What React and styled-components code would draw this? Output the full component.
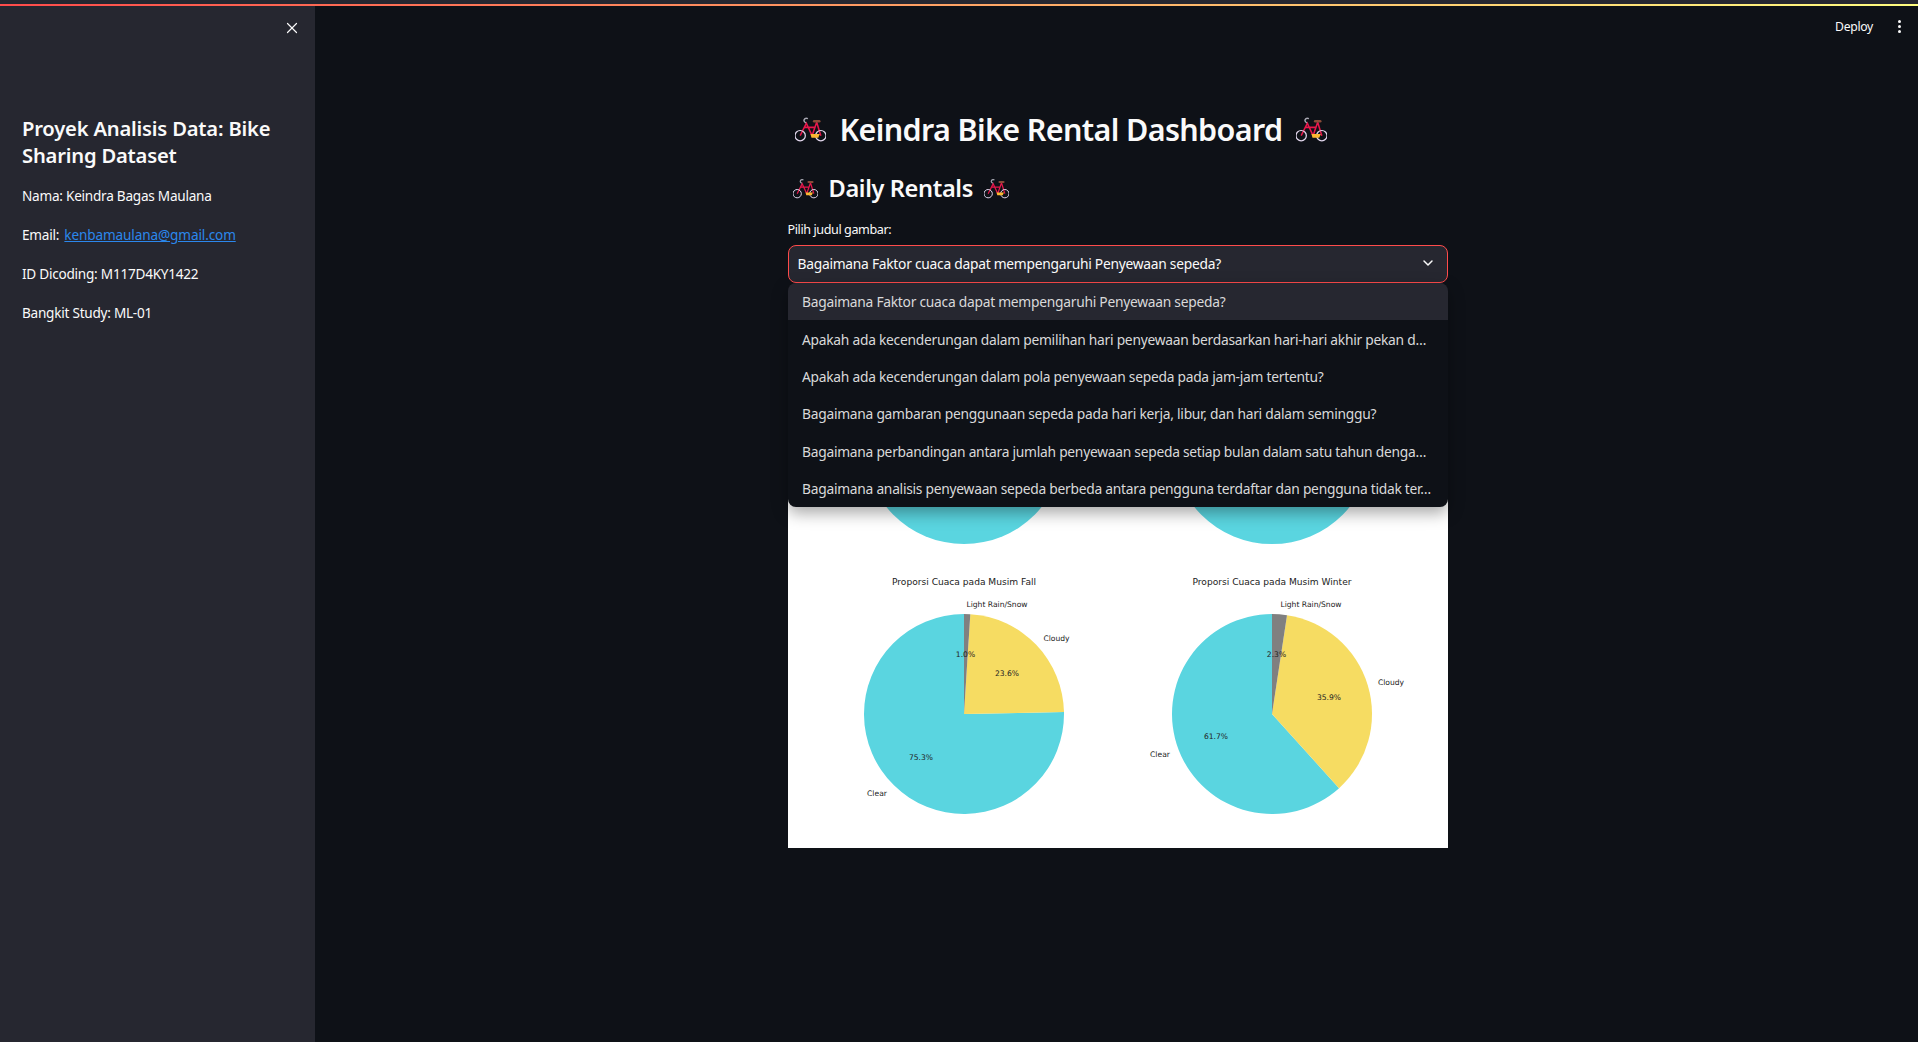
import React from 'react';
import styled, { createGlobalStyle } from 'styled-components';
import { ChevronDown, X } from 'lucide-react';

const options = [
    'Bagaimana Faktor cuaca dapat mempengaruhi Penyewaan sepeda?',
    'Apakah ada kecenderungan dalam pemilihan hari penyewaan berdasarkan hari-hari akhir pekan d…',
    'Apakah ada kecenderungan dalam pola penyewaan sepeda pada jam-jam tertentu?',
    'Bagaimana gambaran penggunaan sepeda pada hari kerja, libur, dan hari dalam seminggu?',
    'Bagaimana perbandingan antara jumlah penyewaan sepeda setiap bulan dalam satu tahun denga…',
    'Bagaimana analisis penyewaan sepeda berbeda antara pengguna terdaftar dan pengguna tidak ter…',
];

const CLEAR = '#5ad5e0';
const CLOUDY = '#f6dc62';
const LIGHT = '#808080';

function slicePath(cx, cy, r, from, to) {
    const rad = (deg) => (deg * Math.PI) / 180;
    const x1 = cx + r * Math.cos(rad(from));
    const y1 = cy - r * Math.sin(rad(from));
    const x2 = cx + r * Math.cos(rad(to));
    const y2 = cy - r * Math.sin(rad(to));
    const large = to - from > 180 ? 1 : 0;
    return `M${cx} ${cy} L${x1} ${y1} A${r} ${r} 0 ${large} 0 ${x2} ${y2} Z`;
}

function Pie({ cx, cy, shares }) {
    let start = 90;
    return (
        <g>
            {shares.map(([share, color]) => {
                const end = start + share * 3.6;
                const d = share === 100
                    ? `M${cx - 100} ${cy} a100 100 0 1 0 200 0 a100 100 0 1 0 -200 0 Z`
                    : slicePath(cx, cy, 100, start, end);
                start = end;
                return <path key={color} d={d} fill={color} />;
            })}
        </g>
    );
}

function Bike({ size }) {
    return (
        <svg width={size} height={size * 0.9} viewBox="0 0 30 27" fill="none">
            <path d="M5 20 L11 8 L16.5 20 L21 7 L25 20 M9.5 12 H19.5" stroke="#e8174b" strokeWidth="1.5" />
            <path d="M12.5 3.5 C9 2.2 7 6 10.6 7.6" stroke="#a9a9b4" strokeWidth="1.4" />
            <path d="M18.5 6 H23.5" stroke="#8a4b38" strokeWidth="2.4" strokeLinecap="round" />
            <circle cx="5" cy="20" r="5" stroke="#e3d8ee" strokeWidth="1.2" />
            <circle cx="25" cy="20" r="5" stroke="#e3d8ee" strokeWidth="1.2" />
            <path d="M15 18.5 H24 L22.5 22 H16 Z" fill="#fbb731" />
        </svg>
    );
}

function Chart() {
    return (
        <ChartSvg viewBox="0 0 660 549">
            <rect width="660" height="549" fill="#fff" />
            <Pie cx={176} cy={145} shares={[[100, CLEAR]]} />
            <Pie cx={484} cy={145} shares={[[100, CLEAR]]} />
            <Pie cx={176} cy={415} shares={[[75.3, CLEAR], [23.7, CLOUDY], [1.0, LIGHT]]} />
            <Pie cx={484} cy={415} shares={[[61.7, CLEAR], [35.9, CLOUDY], [2.4, LIGHT]]} />

            <ChartTitle x="176" y="283">Proporsi Cuaca pada Musim Fall</ChartTitle>
            <ChartLabel x="209" y="305">Light Rain/Snow</ChartLabel>
            <ChartLabel x="268.5" y="339">Cloudy</ChartLabel>
            <ChartLabel x="177.5" y="355">1.0%</ChartLabel>
            <ChartLabel x="219" y="374">23.6%</ChartLabel>
            <ChartLabel x="133" y="458">75.3%</ChartLabel>
            <ChartLabel x="89" y="494">Clear</ChartLabel>

            <ChartTitle x="484" y="283">Proporsi Cuaca pada Musim Winter</ChartTitle>
            <ChartLabel x="523" y="305">Light Rain/Snow</ChartLabel>
            <ChartLabel x="603" y="383">Cloudy</ChartLabel>
            <ChartLabel x="488.5" y="355">2.3%</ChartLabel>
            <ChartLabel x="541" y="398">35.9%</ChartLabel>
            <ChartLabel x="428" y="437">61.7%</ChartLabel>
            <ChartLabel x="372" y="455">Clear</ChartLabel>
        </ChartSvg>
    );
}

function App() {
    return (
        <>
            <GlobalStyle />
            <TopStrip />
            <Layout>
                <Sidebar>
                    <CloseRow><X size={18} strokeWidth={1.6} /></CloseRow>
                    <SideTitle>Proyek Analisis Data: Bike Sharing Dataset</SideTitle>
                    <SideText>Nama: Keindra Bagas Maulana</SideText>
                    <SideText>Email: <MailLink href="#mail">kenbamaulana@gmail.com</MailLink></SideText>
                    <SideText>ID Dicoding: M117D4KY1422</SideText>
                    <SideText>Bangkit Study: ML-01</SideText>
                </Sidebar>
                <Main>
                    <Toolbar>
                        <DeployButton>Deploy</DeployButton>
                        <Kebab><i /><i /><i /></Kebab>
                    </Toolbar>
                    <Column>
                        <PageTitle><Bike size={31} /><span>Keindra Bike Rental Dashboard</span><Bike size={31} /></PageTitle>
                        <SubTitle><Bike size={25} /><span>Daily Rentals</span><Bike size={25} /></SubTitle>
                        <FieldLabel>Pilih judul gambar:</FieldLabel>
                        <SelectWrap>
                            <SelectBox>
                                <span>{options[0]}</span>
                                <ChevronDown size={16} strokeWidth={2.2} />
                            </SelectBox>
                            <Menu>
                                {options.map((text, i) => (
                                    <MenuItem key={text} $active={i === 0}>{text}</MenuItem>
                                ))}
                            </Menu>
                        </SelectWrap>
                        <Chart />
                    </Column>
                </Main>
            </Layout>
        </>
    );
}

export default App;

const GlobalStyle = createGlobalStyle`
    html, body {
        margin: 0;
        height: 100%;
        background: #0e1117;
        overflow: hidden;
    }
    * {
        box-sizing: border-box;
    }
    body {
        font-family: "Noto Sans", "Open Sans", sans-serif;
        color: #fafafa;
    }
`;

const TopStrip = styled.div`
    height: 6px;
    border-top: 4px solid #262730;
    background: linear-gradient(90deg, #ff4b4b, #fffd80);
`;

const Layout = styled.div`
    display: flex;
    height: 1036px;
`;

const Sidebar = styled.aside`
    width: 315px;
    flex-shrink: 0;
    padding: 0 22px;
    background: #262730;
`;

const CloseRow = styled.div`
    display: flex;
    justify-content: flex-end;
    height: 109px;
    padding-top: 13px;
    margin-right: -8px;
    color: #fafafa;
`;

const SideTitle = styled.h2`
    margin: 0 0 17px;
    font-size: 20.2px;
    line-height: 27px;
    font-weight: 600;
    letter-spacing: -0.2px;
`;

const SideText = styled.p`
    margin: 0 0 19px;
    font-size: 13.6px;
    line-height: 20px;
    letter-spacing: -0.25px;
`;

const MailLink = styled.a`
    margin-left: 2px;
    color: #2b87ec;
    letter-spacing: -0.13px;
`;

const Main = styled.main`
    flex: 1;
    min-width: 0;
    padding-left: 2px;
`;

const Toolbar = styled.div`
    display: flex;
    justify-content: flex-end;
    align-items: center;
    gap: 25px;
    height: 40px;
    padding-right: 17px;
`;

const DeployButton = styled.span`
    font-size: 12.2px;
    letter-spacing: -0.3px;
`;

const Kebab = styled.span`
    display: flex;
    flex-direction: column;
    gap: 2px;

    i {
        width: 3px;
        height: 3px;
        border-radius: 50%;
        background: #fafafa;
    }
`;

const Column = styled.div`
    width: 660px;
    margin: 0 auto;
    padding-top: 59px;
`;

const PageTitle = styled.h1`
    display: flex;
    align-items: center;
    gap: 14px;
    margin: 0;
    padding-left: 7px;
    height: 48px;
    font-size: 30.5px;
    font-weight: 600;
    letter-spacing: -0.64px;
    white-space: nowrap;
`;

const SubTitle = styled.h2`
    display: flex;
    align-items: center;
    gap: 11px;
    margin: 15px 0 0;
    padding-left: 5px;
    height: 40px;
    font-size: 23.6px;
    font-weight: 600;
    letter-spacing: -0.37px;
`;

const FieldLabel = styled.label`
    display: block;
    margin-top: 12px;
    font-size: 12.6px;
    line-height: 20px;
    letter-spacing: -0.41px;
`;

const SelectWrap = styled.div`
    position: relative;
    margin: 5px 0 16px;
`;

const SelectBox = styled.div`
    display: flex;
    align-items: center;
    justify-content: space-between;
    height: 38px;
    padding: 0 11px 2px 9px;
    border: 1px solid #ff4b4b;
    border-radius: 8px;
    background: #262730;
    font-size: 13.8px;
    letter-spacing: -0.26px;
`;

const Menu = styled.div`
    position: absolute;
    top: 38px;
    left: 0;
    right: 0;
    height: 224px;
    overflow: hidden;
    border-radius: 8px;
    background: #0e1117;
    box-shadow: 0 6px 16px rgba(0, 0, 0, 0.35);
`;

const MenuItem = styled.div`
    display: flex;
    align-items: center;
    height: 37.4px;
    padding: 0 14.5px;
    background: ${(p) => (p.$active ? '#262730' : 'transparent')};
    color: #d9d9da;
    font-size: 13.8px;
    letter-spacing: -0.26px;
    white-space: nowrap;
`;

const ChartSvg = styled.svg`
    display: block;
    width: 660px;
    height: 549px;
`;

const ChartTitle = styled.text`
    font-family: "DejaVu Sans", sans-serif;
    font-size: 9.1px;
    fill: #222;
    text-anchor: middle;
    dominant-baseline: central;
`;

const ChartLabel = styled.text`
    font-family: "DejaVu Sans", sans-serif;
    font-size: 7.6px;
    fill: #222;
    text-anchor: middle;
    dominant-baseline: central;
`;
